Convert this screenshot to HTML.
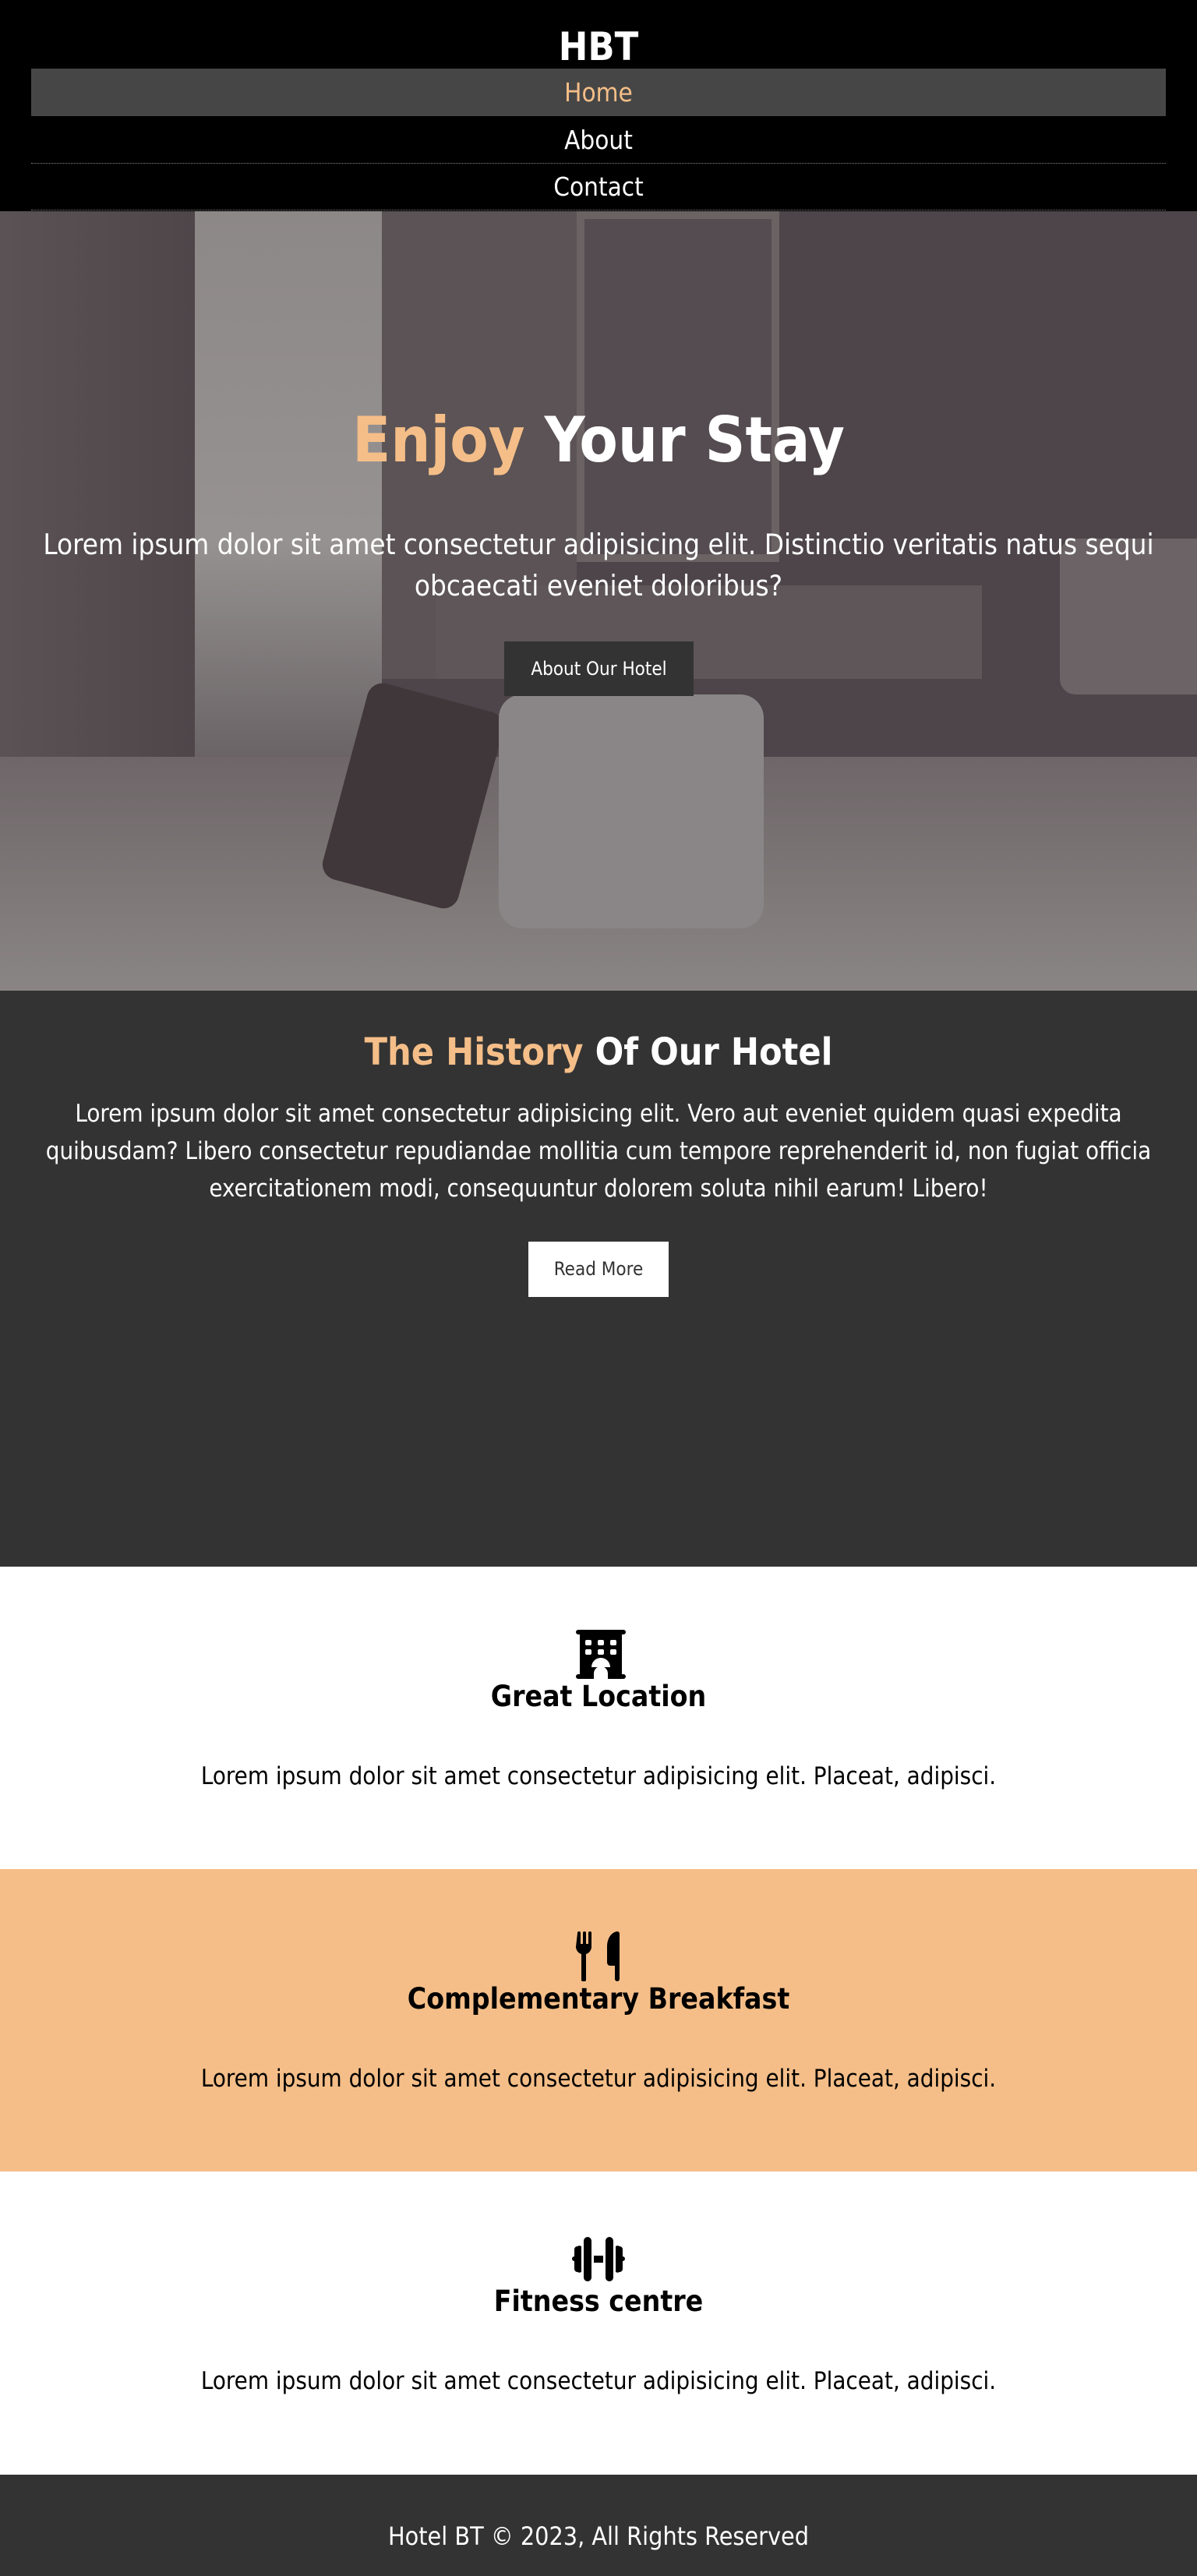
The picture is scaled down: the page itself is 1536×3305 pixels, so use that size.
<!DOCTYPE html>
<html><head><meta charset="utf-8"><style>
*{margin:0;padding:0;box-sizing:border-box}
body{width:1536px;height:3305px;font-family:"DejaVu Sans Condensed","DejaVu Sans",sans-serif;background:#fff;position:relative;overflow:hidden}
.abs{position:absolute}
.c{text-align:center;left:0;width:1536px}
header{position:absolute;left:0;top:0;width:1536px;height:271px;background:#000}
.nav a{position:absolute;left:40px;width:1456px;height:61px;line-height:61px;text-align:center;color:#fff;font-size:33px;text-decoration:none}
.hero{position:absolute;left:0;top:271px;width:1536px;height:1000px;background:#4d4549;overflow:hidden}
.peach{color:#f5be88}
</style></head><body>
<header>
<div class="abs c" style="top:28px;font-size:50px;font-weight:bold;color:#fff;line-height:64px">HBT</div>
<div class="nav">
<a style="top:88px;background:#464646;color:#f5be88">Home</a>
<a style="top:149px;border-bottom:1px dotted #888">About</a>
<a style="top:209px;border-bottom:1px dotted #888">Contact</a>
</div>
</header>
<div class="hero">
<div class="abs" style="left:0;top:0;width:250px;height:1000px;background:linear-gradient(90deg,#5a5254,#4e4649)"></div>
<div class="abs" style="left:250px;top:0;width:240px;height:700px;background:linear-gradient(180deg,#8d8888,#979292 60%,#6a6466)"></div>
<div class="abs" style="left:490px;top:0;width:250px;height:600px;background:#5b5355"></div>
<div class="abs" style="left:740px;top:0;width:260px;height:450px;background:#544c50;border:10px solid #6a6263"></div>
<div class="abs" style="left:560px;top:480px;width:700px;height:120px;background:#5e5658"></div>
<div class="abs" style="left:0;top:700px;width:1536px;height:300px;background:linear-gradient(180deg,#6e6668,#8a8585)"></div>
<div class="abs" style="left:440px;top:620px;width:180px;height:260px;background:#3f3739;border-radius:20px;transform:rotate(15deg)"></div>
<div class="abs" style="left:640px;top:620px;width:340px;height:300px;background:#8a8687;border-radius:30px"></div>
<div class="abs" style="left:1360px;top:420px;width:176px;height:200px;background:#6b6365;border-radius:20px 0 0 20px"></div>
</div>
<div class="abs c" style="top:510px;font-size:80px;font-weight:bold;color:#fff;line-height:110px"><span class="peach">Enjoy</span> Your Stay</div>
<div class="abs" style="left:30px;width:1476px;top:672px;text-align:center;font-size:36.5px;color:#fff;line-height:53px">Lorem ipsum dolor sit amet consectetur adipisicing elit. Distinctio veritatis natus sequi obcaecati eveniet doloribus?</div>
<div class="abs" style="left:647px;top:823px;width:243px;height:70px;background:#333;color:#fff;font-size:24px;line-height:70px;text-align:center">About Our Hotel</div>
<div class="abs" style="left:0;top:1271px;width:1536px;height:739px;background:#333"></div>
<div class="abs c" style="top:1318px;font-size:48px;font-weight:bold;color:#fff;line-height:64px"><span class="peach">The History</span> Of Our Hotel</div>
<div class="abs" style="left:40px;width:1456px;top:1405px;text-align:center;font-size:31px;color:#fff;line-height:48px">Lorem ipsum dolor sit amet consectetur adipisicing elit. Vero aut eveniet quidem quasi expedita quibusdam? Libero consectetur repudiandae mollitia cum tempore reprehenderit id, non fugiat officia exercitationem modi, consequuntur dolorem soluta nihil earum! Libero!</div>
<div class="abs" style="left:678px;top:1593px;width:180px;height:71px;background:#fff;color:#333;font-size:24px;line-height:71px;text-align:center">Read More</div>

<svg class="abs" style="left:739px;top:2091px" width="64" height="63" viewBox="0 0 64 63"><path fill="#000" d="M3 0h58a3 3 0 0 1 0 6h-2v51h2a3 3 0 0 1 0 6H41V56a9 9 0 0 0-18 0v7H3a3 3 0 0 1 0-6h2V6H3a3 3 0 0 1 0-6z"/><g fill="#fff"><rect x="12" y="13" width="8" height="7" rx="2"/><rect x="28" y="13" width="8" height="7" rx="2"/><rect x="44" y="13" width="8" height="7" rx="2"/><rect x="12" y="25" width="8" height="7" rx="2"/><rect x="28" y="25" width="8" height="7" rx="2"/><rect x="44" y="25" width="8" height="7" rx="2"/><path d="M20 48a12 12 0 0 1 24 0z"/></g></svg>
<div class="abs c" style="top:2152px;font-size:37px;font-weight:bold;line-height:50px">Great Location</div>
<div class="abs c" style="top:2258px;font-size:31px;line-height:42px">Lorem ipsum dolor sit amet consectetur adipisicing elit. Placeat, adipisci.</div>

<div class="abs" style="left:0;top:2398px;width:1536px;height:388px;background:#f5be88"></div>
<svg class="abs" style="left:739px;top:2478px" width="58" height="64" viewBox="0 0 58 64"><path fill="#000" d="M2 2a2 2 0 0 1 4 0v14h3V2a2 2 0 0 1 4 0v14h3V2a2 2 0 0 1 4 0v18a10 10 0 0 1-7 9v33a3 3 0 0 1-6 0V29a10 10 0 0 1-7-9z"/><path fill="#000" d="M53 0a3 3 0 0 1 3 3v58a3 3 0 0 1-6 0V44h-6a4 4 0 0 1-4-4V20C40 8 46 1 53 0z"/></svg>
<div class="abs c" style="top:2540px;font-size:37px;font-weight:bold;line-height:50px">Complementary Breakfast</div>
<div class="abs c" style="top:2646px;font-size:31px;line-height:42px">Lorem ipsum dolor sit amet consectetur adipisicing elit. Placeat, adipisci.</div>

<svg class="abs" style="left:728px;top:2870px" width="80" height="57" viewBox="0 0 80 57"><path fill="#000" d="M21 5a5 5 0 0 1 10 0v47a5 5 0 0 1-10 0zM13 12a5 5 0 0 1 5 0v33a5 5 0 0 1-5 0 4 4 0 0 1-4-4V31a3 3 0 0 1 0-6V16a4 4 0 0 1 4-4zM49 5a5 5 0 0 1 10 0v47a5 5 0 0 1-10 0zM62 12a5 5 0 0 1 5 0 4 4 0 0 1 4 4v9a3 3 0 0 1 0 6v10a4 4 0 0 1-4 4 5 5 0 0 1-5 0zM34 24h12v9H34z"/></svg>
<div class="abs c" style="top:2928px;font-size:37px;font-weight:bold;line-height:50px">Fitness centre</div>
<div class="abs c" style="top:3034px;font-size:31px;line-height:42px">Lorem ipsum dolor sit amet consectetur adipisicing elit. Placeat, adipisci.</div>

<div class="abs" style="left:0;top:3175px;width:1536px;height:130px;background:#333"></div>
<div class="abs c" style="top:3232px;font-size:32px;color:#fff;line-height:44px">Hotel BT © 2023, All Rights Reserved</div>
</body></html>
